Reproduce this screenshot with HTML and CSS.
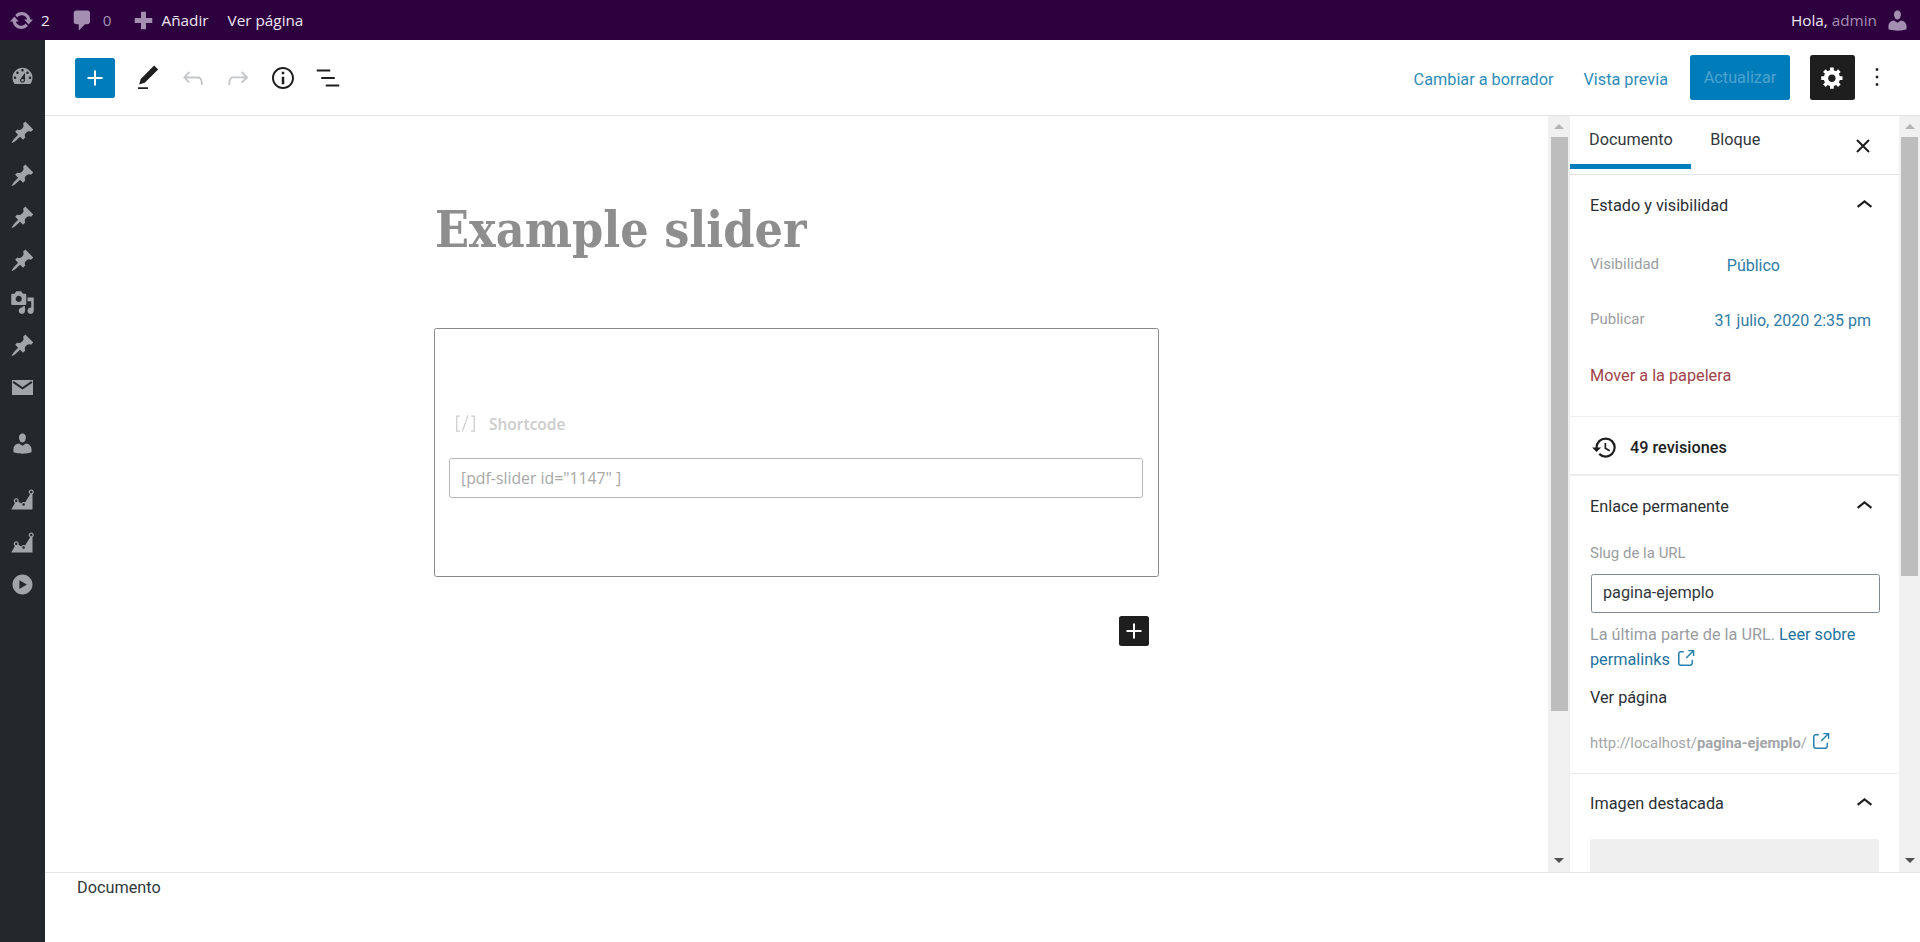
FILE: index.html
```html
<!DOCTYPE html>
<html lang="es">
<head>
    <meta charset="UTF-8" />
    <title>Editar página</title>
    <link rel="stylesheet" href="styles.css">
</head>
<body>
    <svg class="icon-defs" width="0" height="0">
        <symbol id="i-pin" viewBox="0 0 20 20"><path d="M10.44 3.02l1.82-1.82 6.36 6.35-1.83 1.82c-1.05-.68-2.48-.57-3.41.36l-.75.75c-.92.93-1.04 2.35-.35 3.41l-1.83 1.82-2.41-2.41-2.8 2.79c-.42.42-3.38 2.71-3.8 2.29s1.86-3.39 2.28-3.81l2.79-2.79L4.1 9.36l1.83-1.82c1.05.69 2.48.57 3.4-.36l.75-.75c.93-.92 1.05-2.35.36-3.41z"/></symbol>
        <symbol id="i-chart" viewBox="0 0 20 20"><path d="M18 18l.01-12.28c.59-.35.99-.99.99-1.72 0-1.1-.9-2-2-2s-2 .9-2 2c0 .8.47 1.48 1.14 1.8l-4.13 6.58c-.33-.24-.73-.38-1.16-.38-.84 0-1.55.51-1.85 1.24l-2.14-1.53c.09-.22.14-.46.14-.71 0-1.11-.89-2-2-2-1.1 0-2 .89-2 2 0 .73.4 1.36.98 1.71L1 18h17zM17 3c.55 0 1 .45 1 1s-.45 1-1 1-1-.45-1-1 .45-1 1-1zM5 10c.55 0 1 .45 1 1s-.45 1-1 1-1-.45-1-1 .45-1 1-1zm5.85 3c.55 0 1 .45 1 1s-.45 1-1 1-1-.45-1-1 .45-1 1-1z"/></symbol>
        <symbol id="i-user" viewBox="0 0 20 20"><path d="M10 9.25c-2.27 0-2.73-3.44-2.73-3.44C7 4.02 7.82 2 9.97 2c2.16 0 2.98 2.02 2.71 3.81 0 0-.41 3.44-2.68 3.44zm0 2.57L12.72 10c2.39 0 4.52 2.33 4.52 4.53v2.49s-3.65 1.13-7.24 1.13c-3.65 0-7.24-1.13-7.24-1.13v-2.49c0-2.25 1.94-4.48 4.47-4.48z"/></symbol>
        <symbol id="i-chevron" viewBox="0 0 24 24"><path d="M6.5 12.4L12 8l5.5 4.4-.9 1.2L12 10l-4.5 3.6-1-1.2z"/></symbol>
        <symbol id="i-external" viewBox="0 0 24 24"><path d="M18.2 17c0 .7-.6 1.2-1.2 1.2H7c-.7 0-1.2-.6-1.2-1.2V7c0-.7.6-1.2 1.2-1.2h3.2V4.2H7C5.5 4.2 4.2 5.5 4.2 7v10c0 1.5 1.2 2.8 2.8 2.8h10c1.5 0 2.8-1.2 2.8-2.8v-3.6h-1.5V17zM14.9 3v1.5h3.7l-6.4 6.4 1.1 1.1 6.4-6.4v3.7h1.5V3h-6.8z"/></symbol>
        <symbol id="i-plus" viewBox="0 0 24 24"><path d="M18 11.2h-5.2V6h-1.6v5.2H6v1.6h5.2V18h1.6v-5.2H18z"/></symbol>
    </svg>

    <div class="adminbar">
        <div class="adminbar-item">
            <svg class="bar-icon" viewBox="0 0 20 20"><path d="M10.2 3.28c3.53 0 6.43 2.61 6.92 6h2.08l-3.5 4-3.5-4h2.32c-.45-1.97-2.21-3.45-4.32-3.45-1.45 0-2.73.71-3.54 1.78L4.95 5.66C6.23 4.2 8.11 3.28 10.2 3.28zm-.4 13.44c-3.52 0-6.43-2.61-6.92-6H.8l3.5-4c1.17 1.33 2.33 2.67 3.5 4H5.48c.45 1.97 2.21 3.45 4.32 3.45 1.45 0 2.73-.71 3.54-1.78l1.71 1.95c-1.28 1.46-3.15 2.38-5.25 2.38z"/></svg>
            <span>2</span>
        </div>
        <div class="adminbar-item adminbar-comments">
            <svg class="bar-icon" viewBox="0 0 20 20"><path d="M5 2h9c1.1 0 2 .9 2 2v7c0 1.1-.9 2-2 2h-2l-5 5v-5H5c-1.1 0-2-.9-2-2V4c0-1.1.9-2 2-2z"/></svg>
            <span class="dim">0</span>
        </div>
        <div class="adminbar-item adminbar-new">
            <svg class="bar-icon" viewBox="0 0 20 20"><path d="M17 8v4h-5v5H8v-5H3V8h5V3h4v5h5z"/></svg>
            <span>Añadir</span>
        </div>
        <div class="adminbar-item adminbar-view"><span>Ver página</span></div>
        <div class="adminbar-item adminbar-account">
            <span>Hola, <span class="dim">admin</span></span>
            <svg class="bar-icon"><use href="#i-user"/></svg>
        </div>
    </div>

    <div class="layout">
        <nav class="adminmenu">
            <svg class="menu-icon" viewBox="0 0 20 20"><path d="M3.76 16h12.48c1.1-1.37 1.76-3.11 1.76-5 0-4.42-3.58-8-8-8s-8 3.58-8 8c0 1.89.66 3.63 1.76 5zM10 4c.55 0 1 .45 1 1s-.45 1-1 1-1-.45-1-1 .45-1 1-1zM6 6c.55 0 1 .45 1 1s-.45 1-1 1-1-.45-1-1 .45-1 1-1zm8 0c.55 0 1 .45 1 1s-.45 1-1 1-1-.45-1-1 .45-1 1-1zm-5.37 5.55L12 7v6c0 1.1-.9 2-2 2s-2-.9-2-2c0-.57.24-1.08.63-1.45zM4 10c.55 0 1 .45 1 1s-.45 1-1 1-1-.45-1-1 .45-1 1-1zm12 0c.55 0 1 .45 1 1s-.45 1-1 1-1-.45-1-1 .45-1 1-1zm-5 3c0-.55-.45-1-1-1s-1 .45-1 1 .45 1 1 1 1-.45 1-1z"/></svg>
            <svg class="menu-icon menu-gap"><use href="#i-pin"/></svg>
            <svg class="menu-icon"><use href="#i-pin"/></svg>
            <svg class="menu-icon"><use href="#i-pin"/></svg>
            <svg class="menu-icon"><use href="#i-pin"/></svg>
            <svg class="menu-icon" viewBox="0 0 20 20"><path d="M13 11V4c0-.55-.45-1-1-1h-1.67L9 1H5L3.67 3H2c-.55 0-1 .45-1 1v7c0 .55.45 1 1 1h10c.55 0 1-.45 1-1zM7 4.5c1.38 0 2.5 1.12 2.5 2.5S8.38 9.5 7 9.5 4.5 8.38 4.5 7 5.62 4.5 7 4.5zM14 6h5v10.5c0 1.38-1.12 2.5-2.5 2.5S14 17.88 14 16.5s1.12-2.5 2.5-2.5c.17 0 .34.02.5.05V9h-3V6zm-4 8.05V13h2v3.5c0 1.38-1.12 2.5-2.5 2.5S7 17.88 7 16.5 8.12 14 9.5 14c.17 0 .34.02.5.05z"/></svg>
            <svg class="menu-icon"><use href="#i-pin"/></svg>
            <svg class="menu-icon" viewBox="0 0 20 20"><path d="M1.600 4h16.800v12H1.600z"/><path class="mail-fold" d="M2.500 5.500l7.500 5.200 7.500-5.200"/></svg>
            <svg class="menu-icon menu-gap"><use href="#i-user"/></svg>
            <svg class="menu-icon menu-gap"><use href="#i-chart"/></svg>
            <svg class="menu-icon"><use href="#i-chart"/></svg>
            <svg class="menu-icon" viewBox="0 0 20 20"><path d="M10 2c4.42 0 8 3.58 8 8s-3.58 8-8 8-8-3.58-8-8 3.58-8 8-8zm-2.500 4.500v7l6-3.500z"/></svg>
        </nav>

        <div class="editor">
            <header class="toolbar">
                <button class="inserter"><svg class="tool-icon"><use href="#i-plus"/></svg></button>
                <div class="tool-group">
                    <span class="tool"><svg class="tool-icon" viewBox="0 0 24 24"><path d="M20.1 5.1L16.9 2 6.2 12.7l-1.3 4.400 4.500-1.300L20.100 5.100zM4 20.800h8v-1.500H4v1.500z"/></svg></span>
                    <span class="tool tool-off"><svg class="tool-icon" viewBox="0 0 24 24"><path d="M18.3 11.700c-.6-.6-1.400-.9-2.300-.9H6.700l2.900-3.300-1.100-1-4.500 5L8.500 16l1-1-2.700-2.700H16c.5 0 .9.2 1.300.5 1 1 1 3.400 1 4.500v.3h1.500v-.2c0-1.500 0-4.300-1.500-5.700z"/></svg></span>
                    <span class="tool tool-off"><svg class="tool-icon" viewBox="0 0 24 24"><path d="M15.600 6.500l-1.100 1 2.900 3.300H8c-.9 0-1.700.3-2.300.9-1.400 1.500-1.400 4.200-1.400 5.600v.2h1.500v-.3c0-1.100 0-3.500 1-4.500.3-.3.7-.5 1.300-.5h9.200L14.500 15l1.100 1.100 4.600-4.600-4.600-5z"/></svg></span>
                    <span class="tool"><svg class="tool-icon" viewBox="0 0 24 24"><path d="M12 3.200c-4.800 0-8.800 3.900-8.800 8.800 0 4.800 3.900 8.800 8.800 8.800 4.800 0 8.800-3.900 8.800-8.800 0-4.800-4-8.800-8.800-8.800zm0 16c-4 0-7.200-3.300-7.200-7.200C4.800 8 8 4.800 12 4.800s7.200 3.300 7.200 7.200c0 4-3.200 7.200-7.200 7.200zM11 17h2v-6h-2v6zm0-8h2V7h-2v2z"/></svg></span>
                    <span class="tool"><svg class="tool-icon" viewBox="0 0 24 24"><path d="M13.800 5.200H3v1.500h10.800V5.200zm-3.600 12v1.500H21v-1.500H10.200zm7.200-6H6.600v1.500h10.800v-1.500z"/></svg></span>
                </div>
                <div class="toolbar-right">
                    <a class="tool-link">Cambiar a borrador</a>
                    <a class="tool-link tool-link-preview">Vista previa</a>
                    <button class="publish">Actualizar</button>
                    <button class="settings"><svg class="settings-icon" viewBox="0 0 20 20"><path d="M18 12h-2.180c-.17.7-.44 1.350-.81 1.930l1.540 1.540-2.100 2.100-1.540-1.540c-.58.36-1.230.63-1.910.79V19H8v-2.180c-.68-.16-1.330-.43-1.910-.79l-1.540 1.540-2.120-2.120 1.540-1.540c-.36-.58-.63-1.230-.79-1.910H1V9.030h2.170c.16-.7.44-1.350.8-1.940L2.430 5.550l2.100-2.100 1.540 1.540c.58-.37 1.240-.64 1.930-.81V2h3v2.180c.68.16 1.330.43 1.910.79l1.540-1.540 2.120 2.120-1.540 1.540c.36.59.64 1.240.8 1.940H18V12zm-8.500 1.500c1.660 0 3-1.340 3-3s-1.340-3-3-3-3 1.340-3 3 1.340 3 3 3z"/></svg></button>
                    <span class="more"><svg class="tool-icon" viewBox="0 0 24 24"><path d="M13 19h-2v-2h2v2zm0-6h-2v-2h2v2zm0-6h-2V5h2v2z"/></svg></span>
                </div>
            </header>

            <div class="workspace">
                <main class="canvas">
                    <h1 class="post-title">Example slider</h1>
                    <section class="block">
                        <div class="block-label">
                            <svg class="shortcode-icon" viewBox="0 0 20 20"><path d="M5.500 4H3v12h2.500M7.500 16.500l4.500-13M14.500 4H17v12h-2.500"/></svg>
                            <span>Shortcode</span>
                        </div>
                        <div class="block-input">[pdf-slider id="1147" ]</div>
                    </section>
                    <div class="block-after">
                        <span class="block-add"><svg class="block-add-icon"><use href="#i-plus"/></svg></span>
                    </div>
                </main>

                <div class="scrollbar">
                    <span class="arrow-up"></span>
                    <div class="rail"><div class="thumb thumb-canvas"></div></div>
                    <span class="arrow-down"></span>
                </div>

                <aside class="sidebar">
                    <div class="tabs">
                        <span class="tab tab-active">Documento</span>
                        <span class="tab tab-block">Bloque</span>
                        <svg class="tabs-close" viewBox="0 0 20 20"><path d="M4 4l12 12M16 4L4 16"/></svg>
                    </div>

                    <section class="panel panel-status">
                        <div class="panel-head">
                            <span>Estado y visibilidad</span>
                            <svg class="chevron"><use href="#i-chevron"/></svg>
                        </div>
                        <div class="panel-row">
                            <span class="row-label">Visibilidad</span>
                            <a class="row-value row-value-public">Público</a>
                        </div>
                        <div class="panel-row">
                            <span class="row-label">Publicar</span>
                            <a class="row-value">31 julio, 2020 2:35 pm</a>
                        </div>
                        <a class="trash">Mover a la papelera</a>
                    </section>

                    <section class="panel panel-revisions">
                        <svg class="history-icon" viewBox="0 0 24 24"><path d="M13 3a9 9 0 0 0-9 9H1l3.890 3.890.07.14L9 12H6c0-3.870 3.130-7 7-7s7 3.130 7 7-3.130 7-7 7c-1.930 0-3.680-.79-4.940-2.060l-1.420 1.420A8.954 8.954 0 0 0 13 21a9 9 0 0 0 0-18zm-1 5v5l4.280 2.540.72-1.210-3.500-2.080V8H12z"/></svg>
                        <span>49 revisiones</span>
                    </section>

                    <section class="panel panel-link">
                        <div class="panel-head">
                            <span>Enlace permanente</span>
                            <svg class="chevron"><use href="#i-chevron"/></svg>
                        </div>
                        <div class="slug-label">Slug de la URL</div>
                        <div class="slug-input">pagina-ejemplo</div>
                        <p class="slug-help">La última parte de la URL. <a>Leer sobre</a> <a>permalinks <svg class="ext-icon"><use href="#i-external"/></svg></a></p>
                        <div class="view-title">Ver página</div>
                        <div class="view-url">http://localhost/<b>pagina-ejemplo</b>/ <svg class="ext-icon"><use href="#i-external"/></svg></div>
                    </section>

                    <section class="panel panel-image">
                        <div class="panel-head panel-head-image">
                            <span>Imagen destacada</span>
                            <svg class="chevron"><use href="#i-chevron"/></svg>
                        </div>
                        <div class="image-box"></div>
                    </section>
                </aside>

                <div class="scrollbar scrollbar-side">
                    <span class="arrow-up"></span>
                    <div class="rail"><div class="thumb thumb-side"></div></div>
                    <span class="arrow-down"></span>
                </div>
            </div>

            <footer class="crumbs">Documento</footer>
        </div>
    </div>
</body>
</html>
```

FILE: styles.css
```css
* {
    margin: 0;
    padding: 0;
    box-sizing: border-box;
}

body {
    height: 942px;
    overflow: hidden;
    background: #fff;
    font-family: Roboto, "Open Sans", sans-serif;
    font-size: 16.25px;
    color: #1e1e1e;
}

button {
    border: none;
    font: inherit;
}

.icon-defs {
    position: absolute;
}

/* admin bar */
.adminbar {
    height: 40px;
    display: flex;
    align-items: center;
    background: #2d003e;
    color: #eee6f2;
    font-family: "Open Sans", sans-serif;
    font-size: 15.3px;
    font-weight: 500;
}

.adminbar-item {
    display: flex;
    align-items: center;
}

.bar-icon {
    width: 25px;
    height: 25px;
    fill: #a48fb3;
}

.adminbar-item:first-child {
    margin-left: 9px;
}

.adminbar-item:first-child span {
    margin-left: 7px;
}

.adminbar-comments {
    margin-left: 20px;
}

.adminbar-comments span {
    margin-left: 8px;
}

.adminbar-new {
    margin-left: 19px;
}

.adminbar-new span {
    margin-left: 6px;
}

.adminbar-view {
    margin-left: 19px;
}

.adminbar-account {
    margin-left: auto;
    margin-right: 10px;
    gap: 8px;
}

.dim {
    color: #a48fb3;
    font-weight: 400;
}

/* layout */
.layout {
    height: 902px;
    display: flex;
}

.adminmenu {
    width: 45px;
    flex-shrink: 0;
    padding-top: 24px;
    display: flex;
    flex-direction: column;
    align-items: center;
    background: #23282d;
}

.menu-icon {
    width: 25px;
    height: 25px;
    margin-bottom: 17.5px;
    fill: #a0a5aa;
}

.menu-gap {
    margin-top: 13.500px;
}

.mail-fold {
    fill: none;
    stroke: #23282d;
    stroke-width: 1.600;
}

.editor {
    flex: 1;
    min-width: 0;
    display: flex;
    flex-direction: column;
}

/* toolbar */
.toolbar {
    height: 76px;
    flex-shrink: 0;
    display: flex;
    align-items: center;
    padding: 1px 21px 0 30px;
    border-bottom: 1px solid #e2e4e7;
}

.inserter {
    width: 40px;
    height: 40px;
    display: flex;
    align-items: center;
    justify-content: center;
    border-radius: 2.5px;
    background: #007cba;
}

.inserter .tool-icon {
    fill: #fff;
}

.tool-group {
    display: flex;
    margin-left: 10.500px;
}

.tool {
    width: 45px;
    display: flex;
    justify-content: center;
}

.tool-icon {
    width: 30px;
    height: 30px;
    fill: #1e1e1e;
}

.tool-off .tool-icon {
    fill: #c4c6c9;
}

.toolbar-right {
    margin-left: auto;
    margin-bottom: 2px;
    display: flex;
    align-items: center;
    font-size: 16.25px;
}

.tool-link {
    padding-top: 4px;
    color: #2e8cb9;
}

.tool-link-preview {
    margin-left: 30px;
}

.publish {
    width: 100px;
    height: 45px;
    margin-left: 22px;
    border-radius: 2.5px;
    background: #007cba;
    color: #4da3d0;
}

.settings {
    width: 45px;
    height: 45px;
    margin-left: 20px;
    display: flex;
    align-items: center;
    justify-content: center;
    border-radius: 2.5px;
    background: #1e1e1e;
}

.settings-icon {
    width: 25px;
    height: 25px;
    fill: #fff;
}

.more {
    width: 44px;
    display: flex;
    justify-content: center;
}

/* canvas */
.workspace {
    flex: 1;
    min-height: 0;
    display: flex;
}

.canvas {
    flex: 1;
    min-width: 0;
    display: flex;
    flex-direction: column;
    align-items: center;
}

.post-title {
    width: 725px;
    margin-top: 83px;
    padding-left: 1px;
    font-family: "DejaVu Serif", serif;
    font-stretch: condensed;
    font-size: 49.700px;
    line-height: 62px;
    font-weight: 700;
    color: #8e8e8e;
}

.block {
    width: 725px;
    height: 249px;
    margin-top: 67px;
    padding: 82px 15px 0 14px;
    border: 1.250px solid #888;
    border-radius: 2.500px;
}

.block-label {
    display: flex;
    align-items: center;
    gap: 11px;
    height: 25px;
    padding-left: 4px;
    color: #ccc;
    font-family: "Open Sans", sans-serif;
    font-size: 15.500px;
    font-weight: 600;
}

.shortcode-icon {
    width: 25px;
    height: 25px;
    fill: none;
    stroke: #ccc;
    stroke-width: 1;
}

.block-input {
    height: 40px;
    margin-top: 22px;
    padding-left: 11px;
    border: 1px solid #b5b5b5;
    border-radius: 2.500px;
    color: #a8a8a8;
    font-family: "Open Sans", sans-serif;
    font-size: 15.800px;
    line-height: 38px;
}

.block-after {
    width: 725px;
    margin-top: 39px;
    padding-right: 10px;
    display: flex;
    justify-content: flex-end;
}

.block-add {
    width: 30px;
    height: 30px;
    display: flex;
    align-items: center;
    justify-content: center;
    border-radius: 2.500px;
    background: #1e1e1e;
}

.block-add-icon {
    width: 30px;
    height: 30px;
    fill: #fff;
}

/* scrollbars */
.scrollbar {
    width: 22px;
    flex-shrink: 0;
    display: flex;
    flex-direction: column;
    align-items: center;
    padding: 8px 0 9px;
    background: #f0f0f0;
}

.scrollbar-side {
    width: 21px;
}

.arrow-up,
.arrow-down {
    width: 0;
    height: 0;
    border-left: 5px solid transparent;
    border-right: 5px solid transparent;
}

.arrow-up {
    border-bottom: 5px solid #b4b4b4;
}

.arrow-down {
    border-top: 5px solid #505050;
}

.rail {
    flex: 1;
    padding-top: 8px;
}

.thumb {
    width: 17px;
    background: #bdbdbd;
}

.thumb-canvas {
    height: 574px;
}

.thumb-side {
    height: 439px;
}

/* sidebar */
.sidebar {
    width: 329px;
    flex-shrink: 0;
    overflow: hidden;
}

.tabs {
    height: 59px;
    display: flex;
    border-bottom: 1px solid #e2e4e7;
}

.tab {
    height: 53px;
    padding: 0 18.500px 0 19px;
    line-height: 47px;
    color: #32373c;
}

.tab-active {
    border-bottom: 5px solid #007cba;
}

.tabs-close {
    width: 20px;
    height: 20px;
    margin: 20px 26px 0 auto;
    fill: none;
    stroke: #1e1e1e;
    stroke-width: 2;
}

.panel {
    padding: 0 20px;
    border-bottom: 1px solid #eceeef;
}

.panel-head {
    height: 60px;
    display: flex;
    align-items: center;
    justify-content: space-between;
    color: #2b3035;
}

.panel-head-image {
    height: 59px;
}

.chevron {
    width: 33px;
    height: 33px;
    margin-right: -1.500px;
    fill: #1e1e1e;
}

.panel-status {
    height: 242px;
}

.panel-row {
    height: 55px;
    padding-top: 19px;
    display: flex;
    justify-content: space-between;
    align-items: flex-start;
    line-height: 20px;
}

.row-label {
    color: #9a9da1;
    font-size: 15px;
}

.row-value {
    margin-top: 2px;
    color: #2f7ca6;
    margin-right: 8px;
    font-size: 16px;
}

.row-value-public {
    margin-right: 99px;
}

.trash {
    display: block;
    margin-top: 20.500px;
    line-height: 20px;
    color: #a0434b;
}

.panel-revisions {
    height: 59px;
    display: flex;
    align-items: center;
    gap: 12px;
    padding-top: 3px;
    padding-left: 21px;
    border-bottom-width: 2px;
    font-weight: 500;
}

.history-icon {
    width: 27px;
    height: 27px;
    fill: #1e1e1e;
}

.panel-link {
    height: 298px;
}

.slug-label {
    padding-top: 7px;
    line-height: 20px;
    box-sizing: content-box;
    font-size: 15px;
    color: #9a9da1;
}

.slug-input {
    width: 289px;
    height: 39px;
    margin: 11px 0 0 1px;
    padding-left: 11px;
    border: 1.250px solid #7e8993;
    border-radius: 2.500px;
    line-height: 36px;
    color: #32373c;
}

.slug-help {
    margin-top: 10px;
    line-height: 24px;
    color: #9a9da1;
}

.slug-help a {
    color: #24739f;
}

.ext-icon {
    width: 23px;
    height: 23px;
    vertical-align: -5px;
    fill: #2680ad;
}

.view-title {
    margin-top: 14px;
    line-height: 24px;
    color: #2b3035;
}

.view-url {
    margin-top: 20px;
    line-height: 24px;
    font-size: 14.800px;
    color: #a2a5a8;
}

.view-url .ext-icon {
    margin-left: -2px;
}

.panel-image {
    border-bottom: none;
}

.image-box {
    width: 289px;
    height: 120px;
    margin-top: 6px;
    border-radius: 2.500px;
    background: #efefef;
}

/* footer */
.crumbs {
    height: 70px;
    flex-shrink: 0;
    padding: 3px 0 0 32px;
    border-top: 1px solid #e2e4e7;
    line-height: 24px;
    font-size: 16.250px;
    color: #32373c;
    background: #fff;
}
```
